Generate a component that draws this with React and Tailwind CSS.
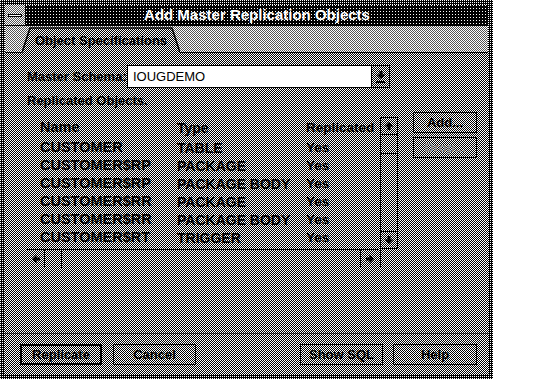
const DITHER =
  "bg-white bg-[image:conic-gradient(#000_25%,#fff_0_50%,#000_0_75%,#fff_0)] bg-[length:2px_2px]";
const LIGHT =
  "bg-white bg-[image:conic-gradient(#555_25%,#fff_0_50%,#555_0_75%,#fff_0)] bg-[length:2px_2px]";
const DARK = "bg-black bg-[image:conic-gradient(#000_75%,#fff_0)] bg-[length:2px_2px]";
const TITLE = "bg-black bg-[image:conic-gradient(at_1px_1px,#000_75%,#fff_0)] bg-[length:3px_3px]";

const ARROWS = {
  up: "5,1 9.5,5.5 6.5,5.5 6.5,9 3.5,9 3.5,5.5 0.5,5.5",
  down: "5,9 9.5,4.5 6.5,4.5 6.5,1 3.5,1 3.5,4.5 0.5,4.5",
  left: "1,5 5.5,0.5 5.5,3.5 9,3.5 9,6.5 5.5,6.5 5.5,9.5",
  right: "9,5 4.5,0.5 4.5,3.5 1,3.5 1,6.5 4.5,6.5 4.5,9.5",
};

function Arrow({ dir }) {
  return (
    <svg width="10" height="10" viewBox="0 0 10 10">
      <polygon points={ARROWS[dir]} fill="#000" />
    </svg>
  );
}

function Button({ children, wide, isDefault, disabled }) {
  return (
    <div
      className={`flex items-center justify-center h-[21px] ${wide} ${
        isDefault ? "border-2" : "border"
      } border-black text-[13px] font-bold ${disabled ? "text-[#8a8a8a]" : "text-black"} ${DITHER}`}
    >
      <span>{children}</span>
    </div>
  );
}

const rows = [
  ["CUSTOMER", "TABLE"],
  ["CUSTOMER$RP", "PACKAGE"],
  ["CUSTOMER$RP", "PACKAGE BODY"],
  ["CUSTOMER$RR", "PACKAGE"],
  ["CUSTOMER$RR", "PACKAGE BODY"],
  ["CUSTOMER$RT", "TRIGGER"],
];

function Tab() {
  return (
    <div className="relative w-[158px] h-[27px] flex items-center justify-center">
      <svg className="absolute inset-0" width="158" height="27" viewBox="0 0 158 27">
        <defs>
          <pattern id="chk" width="2" height="2" patternUnits="userSpaceOnUse">
            <rect width="2" height="2" fill="#fff" />
            <rect x="1" width="1" height="1" fill="#000" />
            <rect y="1" width="1" height="1" fill="#000" />
          </pattern>
        </defs>
        <polygon points="0,27 8,2 150,2 158,27" fill="url(#chk)" />
        <polyline points="0,26.5 8,2 150,2 158,26.5" fill="none" stroke="#000" strokeWidth="1.6" />
      </svg>
      <span className="relative text-[13px] font-bold text-black mt-[3px]">Object Specifications</span>
    </div>
  );
}

export default function App() {
  return (
    <div className="w-[536px] h-[381px] bg-white font-['Liberation_Sans',Arial,sans-serif] overflow-hidden">
      <div className={`w-[493px] h-[379px] p-[5px] flex flex-col ${DARK}`}>
        {/* Title bar */}
        <div className="flex h-[21px] border-b border-black shrink-0">
          <div className={`w-[21px] h-full flex items-center justify-center border-r border-black ${LIGHT}`}>
            <div className="w-[14px] h-[3px] bg-white border border-black" />
          </div>
          <div className={`flex-1 flex items-center justify-center ${TITLE}`}>
            <span className="text-[15px] font-bold text-white">Add Master Replication Objects</span>
          </div>
        </div>

        {/* Tab strip */}
        <div className={`flex h-[27px] shrink-0 ${LIGHT}`}>
          <div className="w-[17px] border-b border-black" />
          <Tab />
          <div className="flex-1 border-b border-black" />
        </div>

        {/* Body */}
        <div className={`flex-1 flex flex-col ${DITHER}`}>
          <div className="flex items-center mt-[12px] ml-[22px] h-[23px]">
            <div className="w-[100px] text-[13px] font-bold text-black">Master Schema:</div>
            <div className="w-[245px] h-full bg-white border border-black flex items-center pl-[5px] text-[13px] text-black">
              IOUGDEMO
            </div>
            <div className={`w-[18px] h-full border border-l-0 border-black flex flex-col items-center justify-center ${DITHER}`}>
              <Arrow dir="down" />
              <div className="w-[9px] h-[2px] bg-black mt-px" />
            </div>
          </div>

          <div className="ml-[22px] mt-[5px] h-[16px] leading-[16px] text-[13px] font-bold text-black">
            Replicated Objects.
          </div>

          <div className="flex ml-[22px] mt-[8px]">
            {/* list */}
            <div className="w-[354px] flex flex-col border-r border-black">
              <div className="flex items-center h-[22px] pl-[13px] text-black font-bold">
                <div className="w-[137px] text-[14.5px]">Name</div>
                <div className="w-[129px] text-[14px]">Type</div>
                <div className="text-[13.5px]">Replicated</div>
              </div>
              {rows.map(([name, type], i) => (
                <div key={i} className="flex items-center h-[18px] pl-[13px] text-black font-bold">
                  <div className="w-[137px] text-[14.5px]">{name}</div>
                  <div className="w-[129px] text-[14px]">{type}</div>
                  <div className="text-[13.5px]">Yes</div>
                </div>
              ))}
              <div className="flex h-[19px] mt-[2px] border-t border-black mr-[2px]">
                <div className="w-[18px] border-r border-black flex items-center justify-center">
                  <Arrow dir="left" />
                </div>
                <div className="w-[17px] border-r border-black" />
                <div className="flex-1" />
                <div className="w-[18px] border-l border-black flex items-center justify-center">
                  <Arrow dir="right" />
                </div>
              </div>
            </div>

            {/* vertical scrollbar */}
            <div className="w-[17px] h-[132px] flex flex-col border-r border-black">
              <div className="h-[18px] border-t border-b border-black flex items-center justify-center">
                <Arrow dir="up" />
              </div>
              <div className="h-[19px] border-b border-black" />
              <div className="flex-1" />
              <div className="h-[18px] border-t border-b border-black flex items-center justify-center">
                <Arrow dir="down" />
              </div>
            </div>

            {/* side buttons */}
            <div className="flex flex-col gap-[4px] ml-[15px] -mt-[5px]">
              <Button wide="w-[64px]">Add...</Button>
              <Button wide="w-[64px]" disabled>
                Drop...
              </Button>
            </div>
          </div>

          <div className="mt-auto h-px bg-black/60" />
          <div className="flex justify-between items-center mt-[10px] mb-[9px] pl-[15px] pr-[11px]">
            <div className="flex gap-[11px]">
              <Button wide="w-[82px]" isDefault>
                Replicate
              </Button>
              <Button wide="w-[83px]">Cancel</Button>
            </div>
            <div className="flex gap-[10px]">
              <Button wide="w-[83px]">Show SQL</Button>
              <Button wide="w-[84px]">Help</Button>
            </div>
          </div>
        </div>
      </div>
    </div>
  );
}
